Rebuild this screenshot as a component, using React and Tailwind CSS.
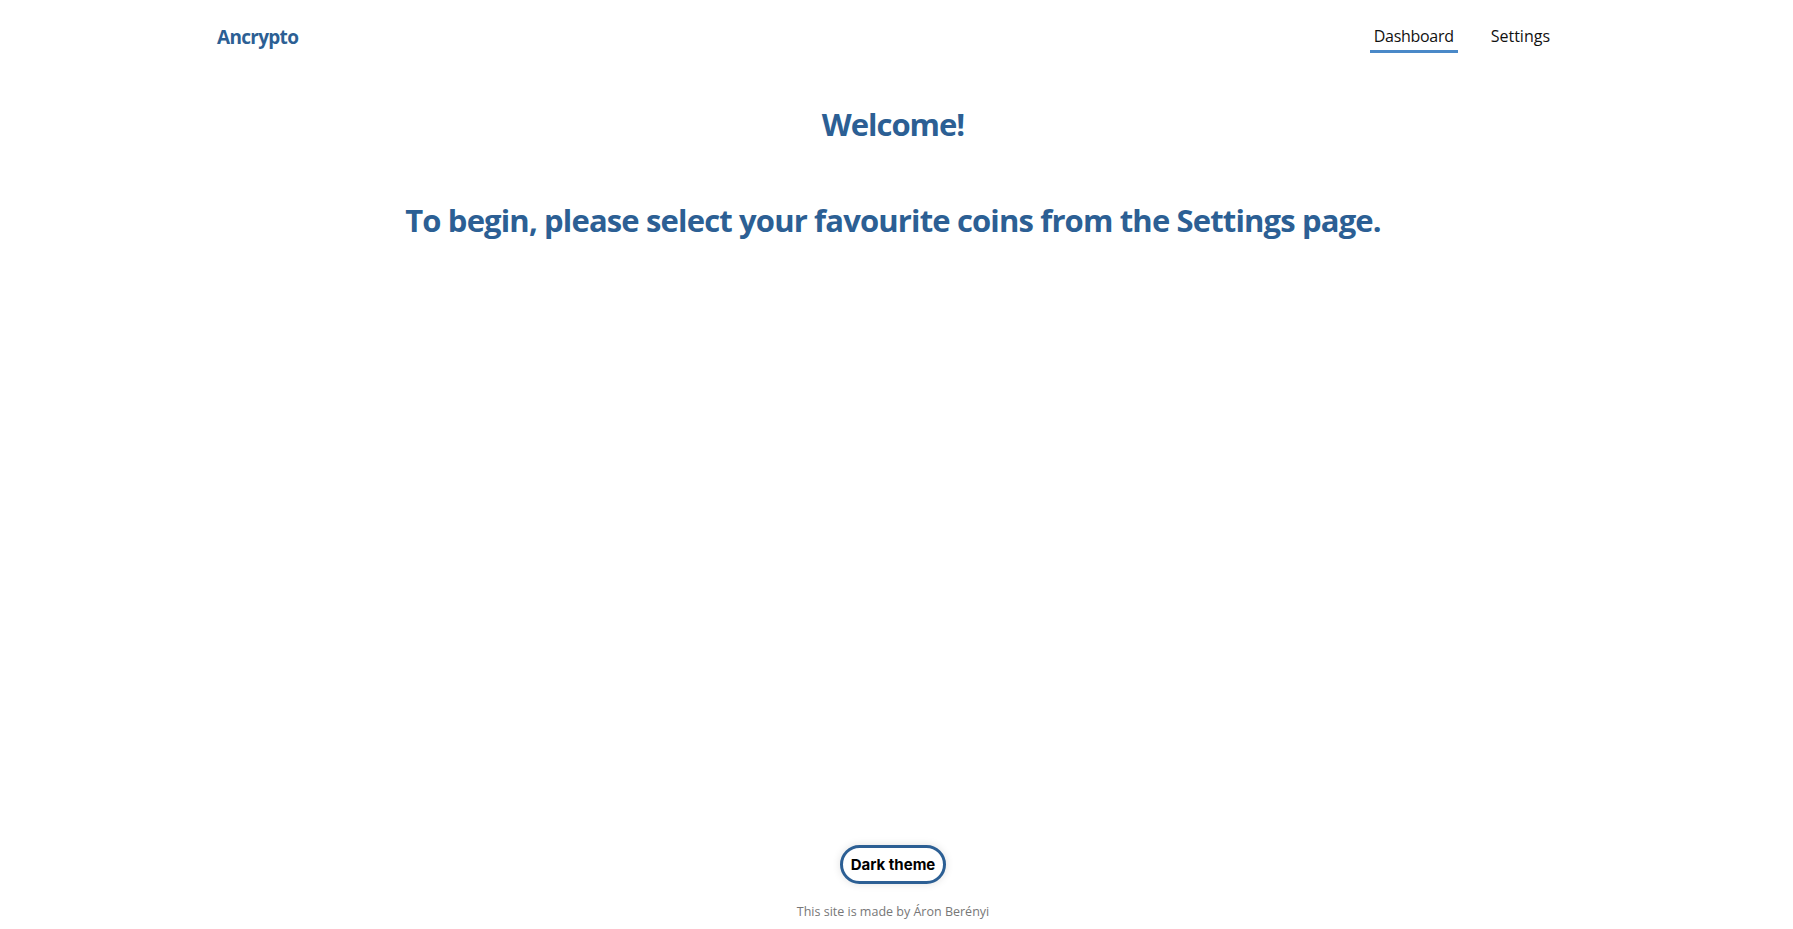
export default function App() {
  return (
    <div className="min-h-screen flex flex-col bg-white font-['Open_Sans',sans-serif]">
      <header className="flex items-center justify-between pl-[217px] pr-[239px] h-[72px]">
        <div className="text-[19px] font-bold text-[#2c5f94] tracking-[-0.7px] mt-[2px]">Ancrypto</div>
        <nav className="flex items-center gap-[29px] text-[16px] text-[#111] mt-[2px]">
          <a className="px-[4px] pt-[4px] pb-[3px] border-b-[3px] border-[#4a89c8] leading-[22px] tracking-[-0.3px]">Dashboard</a>
          <a className="px-[4px] pt-[4px] pb-[3px] border-b-[3px] border-transparent leading-[22px]">Settings</a>
        </nav>
      </header>
      <main className="flex-1 flex flex-col items-center pr-[7px] text-[#2c5f94] font-bold">
        <h1 className="text-[31px] leading-[40px] mt-[32px] tracking-[-1px]">Welcome!</h1>
        <h2 className="text-[31px] leading-[40px] mt-[56px] tracking-[-0.85px]">To begin, please select your favourite coins from the Settings page.</h2>
      </main>
      <footer className="flex flex-col items-center pr-[7px] pb-[8px]">
        <button className="h-[39px] px-[8px] pt-[2px] rounded-full border-[3px] border-[#2c5f94] bg-white shadow-[0_0_8px_rgba(0,0,0,0.12)] text-[15px] font-bold text-black font-['Inter',sans-serif]">Dark theme</button>
        <p className="mt-[19px] text-[12.5px] text-[#777] leading-[18px]">This site is made by Áron Berényi</p>
      </footer>
    </div>
  );
}
